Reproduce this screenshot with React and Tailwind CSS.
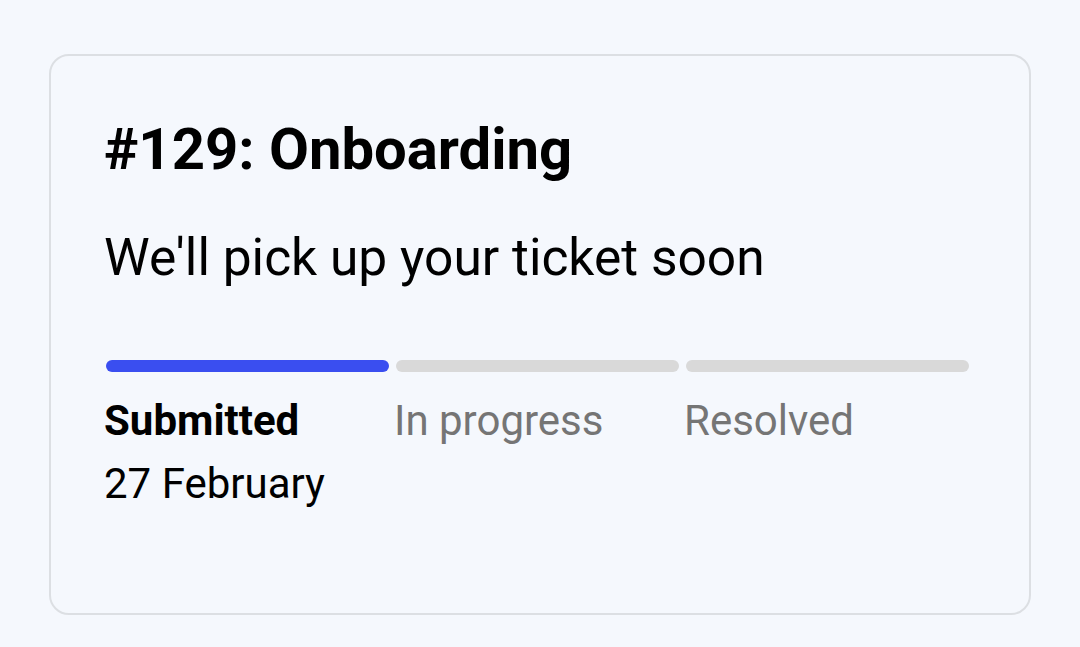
import React from 'react';

const steps = [
  { label: 'Submitted', date: '27 February', done: true },
  { label: 'In progress', done: false },
  { label: 'Resolved', done: false },
];

const App = () => {
  return (
    <div
      className="min-h-[647px] bg-[#f5f8fd] pt-[54px] px-[49px]"
      style={{ fontFamily: 'Roboto, "Noto Sans", sans-serif' }}
    >
      <div className="h-[561px] rounded-[20px] border-2 border-[#dcdfe3] bg-[#f5f8fd] pt-[58px] pl-[53px] pr-[55px]">
        <h1 className="text-[58px] leading-[70px] font-bold text-black">#129: Onboarding</h1>
        <p className="mt-[44px] text-[51.5px] leading-[60px] text-black">We'll pick up your ticket soon</p>

        {/* progress steps */}
        <div className="mt-[72px] ml-[2px] grid w-[863px] grid-cols-3 gap-x-[7px]">
          {steps.map((step) => (
            <div key={step.label}>
              <div className={step.done ? 'h-[12px] rounded-full bg-[#3a4ef0]' : 'h-[12px] rounded-full bg-[#d9d9d9]'} />
              <div
                className={
                  step.done
                    ? 'mt-[24px] -ml-[2px] text-[42px] leading-[50px] font-bold text-black'
                    : 'mt-[24px] -ml-[2px] text-[42px] leading-[50px] text-[#757575]'
                }
              >
                {step.label}
              </div>
              {step.date && (
                <div className="mt-[13px] -ml-[2px] text-[42px] leading-[50px] text-black">{step.date}</div>
              )}
            </div>
          ))}
        </div>
      </div>
    </div>
  );
};

export default App;
